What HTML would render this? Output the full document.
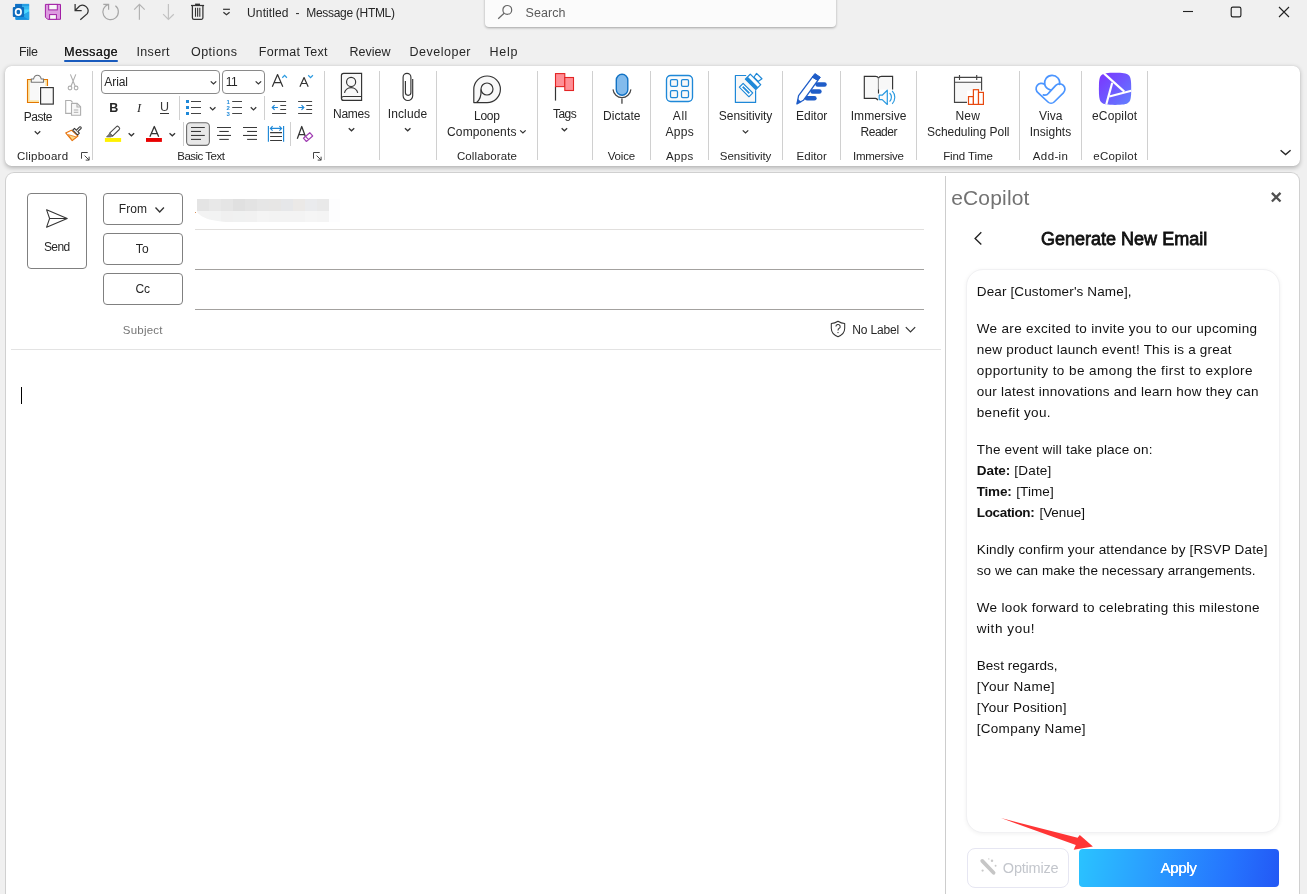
<!DOCTYPE html>
<html><head><meta charset="utf-8"><title>Untitled - Message (HTML)</title>
<style>
html,body{margin:0;padding:0;width:1307px;height:894px;overflow:hidden;}
body{width:1307px;height:894px;overflow:hidden;background:#f0f0f0;position:relative;font-family:"Liberation Sans",sans-serif;}
.t{position:absolute;white-space:pre;font-family:"Liberation Sans",sans-serif;}
.abs{position:absolute;}
svg{position:absolute;overflow:visible;}
.sep{position:absolute;width:1px;background:#d0d0d0;top:71px;height:89px;}
.ribbon{position:absolute;left:5px;top:66px;width:1295px;height:100px;background:#fff;border-radius:6.5px;box-shadow:0 1.5px 4px rgba(0,0,0,.25),0 0 1px rgba(0,0,0,.14);}
.compose{position:absolute;left:5px;top:172px;width:1293px;height:721px;background:#fff;border:1px solid #d0d0d0;border-bottom:none;border-radius:9px 9px 0 0;}
.search{position:absolute;left:485px;top:-6px;width:351px;height:33px;background:#fbfbfb;border-radius:4px;box-shadow:0 1px 2.5px rgba(0,0,0,.32);}
.btn{position:absolute;border:1px solid #808080;border-radius:4px;background:#fff;box-sizing:border-box;}
.uline{position:absolute;left:195px;width:729px;height:1px;background:#a6a6a6;}
</style></head>
<body>
<div id="root" style="position:absolute;left:0;top:0;width:1307px;height:894px;overflow:hidden;will-change:transform;">
<div class="search"></div>
<span class="t" style="left:247.12px;top:5.37px;font-size:12px;line-height:17px;letter-spacing:0.096px;color:#262626;">Untitled</span>
<span class="t" style="left:295.42px;top:5.37px;font-size:12px;line-height:17px;letter-spacing:0.000px;color:#262626;">-</span>
<span class="t" style="left:306.22px;top:5.37px;font-size:12px;line-height:17px;letter-spacing:-0.302px;color:#262626;">Message (HTML)</span>
<span class="t" style="left:525.50px;top:3.57px;font-size:12.5px;line-height:18px;letter-spacing:0.079px;color:#5a5a5a;">Search</span>
<span class="t" style="left:18.90px;top:43.37px;font-size:12.5px;line-height:18px;letter-spacing:-0.381px;color:#262626;">File</span>
<span class="t" style="left:64.10px;top:43.37px;font-size:12.5px;line-height:18px;letter-spacing:0.446px;color:#1f1f1f;text-shadow:0.28px 0 0 #1f1f1f;">Message</span>
<div class="abs" style="left:64px;top:60px;width:54px;height:2px;background:#185abd;border-radius:1px"></div>
<span class="t" style="left:136.50px;top:43.37px;font-size:12.5px;line-height:18px;letter-spacing:0.347px;color:#262626;">Insert</span>
<span class="t" style="left:190.90px;top:43.37px;font-size:12.5px;line-height:18px;letter-spacing:0.520px;color:#262626;">Options</span>
<span class="t" style="left:258.80px;top:43.37px;font-size:12.5px;line-height:18px;letter-spacing:0.294px;color:#262626;">Format Text</span>
<span class="t" style="left:349.50px;top:43.37px;font-size:12.5px;line-height:18px;letter-spacing:0.003px;color:#262626;">Review</span>
<span class="t" style="left:409.50px;top:43.37px;font-size:12.5px;line-height:18px;letter-spacing:0.503px;color:#262626;">Developer</span>
<span class="t" style="left:489.50px;top:43.37px;font-size:12.5px;line-height:18px;letter-spacing:0.764px;color:#262626;">Help</span>
<div class="ribbon"></div>
<div class="sep" style="left:92.0px"></div>
<div class="sep" style="left:324.0px"></div>
<div class="sep" style="left:379.0px"></div>
<div class="sep" style="left:436.0px"></div>
<div class="sep" style="left:537.0px"></div>
<div class="sep" style="left:592.0px"></div>
<div class="sep" style="left:650.0px"></div>
<div class="sep" style="left:708.0px"></div>
<div class="sep" style="left:782.0px"></div>
<div class="sep" style="left:840.0px"></div>
<div class="sep" style="left:916.0px"></div>
<div class="sep" style="left:1019.0px"></div>
<div class="sep" style="left:1081.0px"></div>
<div class="sep" style="left:1147.0px"></div>
<div class="sep" style="left:179px;top:96px;height:24px"></div>
<div class="sep" style="left:264px;top:96px;height:24px"></div>
<div class="sep" style="left:183px;top:122px;height:24px"></div>
<div class="sep" style="left:290px;top:122px;height:24px"></div>
<span class="t" style="left:23.72px;top:109.47px;font-size:12px;line-height:17px;letter-spacing:-0.481px;color:#262626;">Paste</span>
<span class="t" style="left:16.94px;top:147.97px;font-size:11.5px;line-height:16px;letter-spacing:0.237px;color:#262626;">Clipboard</span>
<span class="t" style="left:177.24px;top:147.97px;font-size:11.5px;line-height:16px;letter-spacing:-0.498px;color:#262626;">Basic Text</span>
<div class="btn" style="left:101px;top:70px;width:119px;height:24px;border-color:#8a8a8a"></div>
<div class="btn" style="left:222px;top:70px;width:43px;height:24px;border-color:#8a8a8a"></div>
<span class="t" style="left:104.32px;top:74.47px;font-size:12px;line-height:17px;letter-spacing:-0.086px;color:#262626;">Arial</span>
<span class="t" style="left:225.72px;top:74.47px;font-size:12px;line-height:17px;letter-spacing:-0.497px;color:#262626;">11</span>
<span class="t" style="left:109.30px;top:99.27px;font-size:12.5px;line-height:18px;letter-spacing:0.000px;color:#262626;font-weight:bold;">B</span>
<span class="t" style="left:137.00px;top:99.27px;font-size:12.5px;line-height:18px;letter-spacing:0.000px;color:#262626;font-style:italic;font-family:'Liberation Serif',serif;">I</span>
<span class="t" style="left:159.90px;top:98.37px;font-size:12.5px;line-height:18px;letter-spacing:0.000px;color:#3a3a3a;">U</span>
<div class="abs" style="left:160px;top:113px;width:9px;height:1px;background:#333"></div>
<span class="t" style="left:333.02px;top:106.47px;font-size:12px;line-height:17px;letter-spacing:-0.287px;color:#262626;">Names</span>
<span class="t" style="left:387.72px;top:106.47px;font-size:12px;line-height:17px;letter-spacing:0.127px;color:#262626;">Include</span>
<span class="t" style="left:474.02px;top:108.47px;font-size:12px;line-height:17px;letter-spacing:-0.245px;color:#262626;">Loop</span>
<span class="t" style="left:447.02px;top:124.47px;font-size:12px;line-height:17px;letter-spacing:0.147px;color:#262626;">Components</span>
<span class="t" style="left:456.94px;top:147.97px;font-size:11.5px;line-height:16px;letter-spacing:0.111px;color:#262626;">Collaborate</span>
<span class="t" style="left:552.92px;top:106.47px;font-size:12px;line-height:17px;letter-spacing:-0.529px;color:#262626;">Tags</span>
<span class="t" style="left:603.12px;top:108.47px;font-size:12px;line-height:17px;letter-spacing:0.002px;color:#262626;">Dictate</span>
<span class="t" style="left:607.74px;top:147.97px;font-size:11.5px;line-height:16px;letter-spacing:-0.153px;color:#262626;">Voice</span>
<span class="t" style="left:672.82px;top:108.47px;font-size:12px;line-height:17px;letter-spacing:0.562px;color:#262626;">All</span>
<span class="t" style="left:665.52px;top:124.47px;font-size:12px;line-height:17px;letter-spacing:0.303px;color:#262626;">Apps</span>
<span class="t" style="left:666.04px;top:147.97px;font-size:11.5px;line-height:16px;letter-spacing:0.336px;color:#262626;">Apps</span>
<span class="t" style="left:718.82px;top:108.47px;font-size:12px;line-height:17px;letter-spacing:-0.046px;color:#262626;">Sensitivity</span>
<span class="t" style="left:719.84px;top:147.97px;font-size:11.5px;line-height:16px;letter-spacing:-0.025px;color:#262626;">Sensitivity</span>
<span class="t" style="left:796.12px;top:108.47px;font-size:12px;line-height:17px;letter-spacing:-0.038px;color:#262626;">Editor</span>
<span class="t" style="left:796.54px;top:147.97px;font-size:11.5px;line-height:16px;letter-spacing:0.056px;color:#262626;">Editor</span>
<span class="t" style="left:850.72px;top:108.47px;font-size:12px;line-height:17px;letter-spacing:0.041px;color:#262626;">Immersive</span>
<span class="t" style="left:860.52px;top:124.47px;font-size:12px;line-height:17px;letter-spacing:-0.479px;color:#262626;">Reader</span>
<span class="t" style="left:853.04px;top:147.97px;font-size:11.5px;line-height:16px;letter-spacing:-0.264px;color:#262626;">Immersive</span>
<span class="t" style="left:955.52px;top:108.47px;font-size:12px;line-height:17px;letter-spacing:0.177px;color:#262626;">New</span>
<span class="t" style="left:926.92px;top:124.47px;font-size:12px;line-height:17px;letter-spacing:-0.012px;color:#262626;">Scheduling Poll</span>
<span class="t" style="left:943.14px;top:147.97px;font-size:11.5px;line-height:16px;letter-spacing:-0.083px;color:#262626;">Find Time</span>
<span class="t" style="left:1039.02px;top:108.47px;font-size:12px;line-height:17px;letter-spacing:0.111px;color:#262626;">Viva</span>
<span class="t" style="left:1029.72px;top:124.47px;font-size:12px;line-height:17px;letter-spacing:0.015px;color:#262626;">Insights</span>
<span class="t" style="left:1032.84px;top:147.97px;font-size:11.5px;line-height:16px;letter-spacing:0.376px;color:#262626;">Add-in</span>
<span class="t" style="left:1092.02px;top:108.47px;font-size:12px;line-height:17px;letter-spacing:0.162px;color:#262626;">eCopilot</span>
<span class="t" style="left:1093.24px;top:147.97px;font-size:11.5px;line-height:16px;letter-spacing:0.247px;color:#262626;">eCopilot</span>
<div class="compose"></div>
<div class="btn" style="left:27px;top:193px;width:60px;height:76px"></div>
<div class="btn" style="left:103px;top:193px;width:80px;height:32px"></div>
<div class="btn" style="left:103px;top:233px;width:80px;height:32px"></div>
<div class="btn" style="left:103px;top:273px;width:80px;height:32px"></div>
<span class="t" style="left:43.92px;top:239.47px;font-size:12px;line-height:17px;letter-spacing:-0.588px;color:#262626;">Send</span>
<span class="t" style="left:118.72px;top:201.47px;font-size:12px;line-height:17px;letter-spacing:0.088px;color:#262626;">From</span>
<span class="t" style="left:135.82px;top:241.47px;font-size:12px;line-height:17px;letter-spacing:0.286px;color:#262626;">To</span>
<span class="t" style="left:135.52px;top:281.47px;font-size:12px;line-height:17px;letter-spacing:-0.206px;color:#262626;">Cc</span>
<span class="t" style="left:122.74px;top:321.97px;font-size:11.5px;line-height:16px;letter-spacing:0.227px;color:#767676;">Subject</span>
<div class="uline" style="top:229px;background:#e1dfdd"></div><div class="uline" style="top:269px;background:#a3a19f"></div><div class="uline" style="top:309px;background:#a3a19f"></div>
<div class="abs" style="left:11px;top:349px;width:930px;height:1px;background:#e3e3e3"></div>
<div class="abs" style="left:21px;top:387px;width:1px;height:17px;background:#000"></div>
<span class="t" style="left:852.32px;top:321.77px;font-size:12px;line-height:17px;letter-spacing:-0.168px;color:#262626;">No Label</span>
<svg width="160" height="40" viewBox="190 195 160 40" style="left:190px;top:195px"><defs><clipPath id="mz"><path d="M197 199 H329 V222 H226 C212 221 201 218 197 212 Z"/></clipPath></defs><g clip-path="url(#mz)"><rect x="197" y="199" width="12.2" height="12" fill="#e4e4e4"/><rect x="197" y="211" width="12.2" height="11" fill="#f3f3f3"/><rect x="209" y="199" width="12.2" height="12" fill="#e8e8e8"/><rect x="209" y="211" width="12.2" height="11" fill="#f2f3f3"/><rect x="221" y="199" width="12.2" height="12" fill="#e5e5e5"/><rect x="221" y="211" width="12.2" height="11" fill="#f0f0f0"/><rect x="233" y="199" width="12.2" height="12" fill="#e0e0e0"/><rect x="233" y="211" width="12.2" height="11" fill="#f0f1f1"/><rect x="245" y="199" width="12.2" height="12" fill="#e3e3e3"/><rect x="245" y="211" width="12.2" height="11" fill="#f1f1f1"/><rect x="257" y="199" width="12.2" height="12" fill="#e6e6e6"/><rect x="257" y="211" width="12.2" height="11" fill="#f4f4f4"/><rect x="269" y="199" width="12.2" height="12" fill="#e7e6e5"/><rect x="269" y="211" width="12.2" height="11" fill="#f3f3f3"/><rect x="281" y="199" width="12.2" height="12" fill="#e6e7e9"/><rect x="281" y="211" width="12.2" height="11" fill="#f3f3f3"/><rect x="293" y="199" width="12.2" height="12" fill="#ebe9e7"/><rect x="293" y="211" width="12.2" height="11" fill="#f3f3f3"/><rect x="305" y="199" width="12.2" height="12" fill="#eaebed"/><rect x="305" y="211" width="12.2" height="11" fill="#f5f5f5"/><rect x="317" y="199" width="12.2" height="12" fill="#e9e9e9"/><rect x="317" y="211" width="12.2" height="11" fill="#f4f4f4"/></g><rect x="329" y="199" width="11" height="23" fill="#fdfdfe"/><rect x="195" y="212" width="1" height="1" fill="#d9905a"/></svg>
<div class="abs" style="left:945px;top:176px;width:1px;height:718px;background:#cdcdcd"></div>
<span class="t" style="left:951.16px;top:182.75px;font-size:21px;line-height:29px;letter-spacing:0.175px;color:#727272;">eCopilot</span>
<span class="t" style="left:1040.88px;top:227.16px;font-size:18px;line-height:25px;letter-spacing:0.016px;color:#111;-webkit-text-stroke:0.8px #111;">Generate New Email</span>
<div class="abs" style="left:966px;top:269px;width:313.5px;height:563.5px;border:1px solid #f1f1f3;border-radius:17px;box-shadow:0 1px 4px rgba(0,0,0,.06);box-sizing:border-box;background:#fff"></div>
<span class="t" style="left:976.76px;top:282.47px;font-size:13.5px;line-height:19px;letter-spacing:0.132px;color:#111;">Dear [Customer&#x27;s Name],</span>
<span class="t" style="left:976.76px;top:319.47px;font-size:13.5px;line-height:19px;letter-spacing:0.329px;color:#111;">We are excited to invite you to our upcoming</span>
<span class="t" style="left:976.76px;top:340.47px;font-size:13.5px;line-height:19px;letter-spacing:0.222px;color:#111;">new product launch event! This is a great</span>
<span class="t" style="left:976.76px;top:361.47px;font-size:13.5px;line-height:19px;letter-spacing:0.445px;color:#111;">opportunity to be among the first to explore</span>
<span class="t" style="left:976.76px;top:382.47px;font-size:13.5px;line-height:19px;letter-spacing:0.247px;color:#111;">our latest innovations and learn how they can</span>
<span class="t" style="left:976.76px;top:403.47px;font-size:13.5px;line-height:19px;letter-spacing:0.362px;color:#111;">benefit you.</span>
<span class="t" style="left:976.76px;top:440.47px;font-size:13.5px;line-height:19px;letter-spacing:0.194px;color:#111;">The event will take place on:</span>
<span class="t" style="left:976.76px;top:540.47px;font-size:13.5px;line-height:19px;letter-spacing:0.168px;color:#111;">Kindly confirm your attendance by [RSVP Date]</span>
<span class="t" style="left:976.76px;top:561.47px;font-size:13.5px;line-height:19px;letter-spacing:0.064px;color:#111;">so we can make the necessary arrangements.</span>
<span class="t" style="left:976.76px;top:598.47px;font-size:13.5px;line-height:19px;letter-spacing:0.327px;color:#111;">We look forward to celebrating this milestone</span>
<span class="t" style="left:976.76px;top:619.47px;font-size:13.5px;line-height:19px;letter-spacing:0.563px;color:#111;">with you!</span>
<span class="t" style="left:976.76px;top:656.47px;font-size:13.5px;line-height:19px;letter-spacing:0.041px;color:#111;">Best regards,</span>
<span class="t" style="left:976.76px;top:677.47px;font-size:13.5px;line-height:19px;letter-spacing:0.324px;color:#111;">[Your Name]</span>
<span class="t" style="left:976.76px;top:698.47px;font-size:13.5px;line-height:19px;letter-spacing:0.230px;color:#111;">[Your Position]</span>
<span class="t" style="left:976.76px;top:719.47px;font-size:13.5px;line-height:19px;letter-spacing:0.288px;color:#111;">[Company Name]</span>
<span class="t" style="left:976.76px;top:461.47px;font-size:13.5px;line-height:19px;letter-spacing:-0.044px;color:#111;font-weight:bold;">Date:</span>
<span class="t" style="left:1014.36px;top:461.47px;font-size:13.5px;line-height:19px;letter-spacing:0.172px;color:#111;">[Date]</span>
<span class="t" style="left:976.76px;top:482.47px;font-size:13.5px;line-height:19px;letter-spacing:-0.195px;color:#111;font-weight:bold;">Time:</span>
<span class="t" style="left:1016.16px;top:482.47px;font-size:13.5px;line-height:19px;letter-spacing:0.116px;color:#111;">[Time]</span>
<span class="t" style="left:976.76px;top:503.47px;font-size:13.5px;line-height:19px;letter-spacing:-0.345px;color:#111;font-weight:bold;">Location:</span>
<span class="t" style="left:1039.46px;top:503.47px;font-size:13.5px;line-height:19px;letter-spacing:-0.052px;color:#111;">[Venue]</span>
<div class="abs" style="left:967px;top:848px;width:102px;height:40px;border:1px solid #e6e6f2;border-radius:8px;box-sizing:border-box;background:#fff"></div>
<div class="abs" style="left:1079px;top:849px;width:200px;height:38px;border-radius:4px;background:linear-gradient(100deg,#2ac3ff 0%,#2a9eff 35%,#2574fe 75%,#2358f5 100%)"></div>
<span class="t" style="left:1002.82px;top:857.86px;font-size:14.5px;line-height:20px;letter-spacing:-0.207px;color:#c3c6cc;">Optimize</span>
<span class="t" style="left:1160.40px;top:857.36px;font-size:15px;line-height:21px;letter-spacing:-0.281px;color:#fff;text-shadow:0.3px 0 0 #fff;">Apply</span>
<svg width="1307" height="894" viewBox="0 0 1307 894" style="left:0;top:0"><g>
<rect x="15.2" y="3.9" width="13.9" height="15.8" rx="1" fill="#1b93e6"/>
<rect x="15.2" y="3.9" width="7" height="5.3" fill="#0f6fc4"/>
<rect x="22.2" y="3.9" width="6.9" height="5.3" fill="#35b8f1"/>
<rect x="22.2" y="3.9" width="6.9" height="2.2" fill="#1a86d6" opacity=".55"/>
<path d="M22.2 9.2 H29.1 V12.4 L22.2 15.5 Z" fill="#50d9ff"/>
<path d="M15.2 19.7 H29.1 V11.6 L15.2 19.7 Z" fill="#1490df"/>
<path d="M22 15.8 L29.1 19.7 V11.6 Z" fill="#28a8ea"/>
<rect x="12.8" y="7" width="11.3" height="10.1" rx="1" fill="#0f6cbd"/>
<ellipse cx="18.35" cy="12" rx="2.75" ry="3.05" fill="none" stroke="#fff" stroke-width="1.7"/>
</g>
<g>
<path d="M45.4 4.4 H60.5 V19.3 H47.6 L45.4 17.1 Z" fill="#dc9be0" stroke="#a11fa5" stroke-width="1"/>
<rect x="48.7" y="4.4" width="8.6" height="5.5" fill="#f8f8f8" stroke="#a11fa5" stroke-width="1"/>
<rect x="49.6" y="14.6" width="6.8" height="4.7" fill="#f8f8f8" stroke="#a11fa5" stroke-width="1"/>
</g>
<path d="M75.1 4.1 V10.5 H81.7 M75.4 10.2 L79.6 6 A5.6 5.6 0 0 1 87.3 13.6 L80.3 19.7" fill="none" stroke="#333" stroke-width="1.25"/>
<path d="M103.3 4.3 H108.6 V9.7 M108.6 4.4 A7.75 7.75 0 1 0 115.4 5.8" fill="none" stroke="#a6a6a6" stroke-width="1.2"/>
<path d="M139.4 4.3 V19.7 M134.2 9.7 L139.4 4.4 L144.7 9.7" fill="none" stroke="#b3b3b3" stroke-width="1.2"/>
<path d="M168.4 4.1 V19.5 M163.1 14.2 L168.4 19.5 L173.8 14.2" fill="none" stroke="#c2c2c2" stroke-width="1.2"/>
<g fill="none" stroke="#333" stroke-width="1.25">
<path d="M191 5.5 H204.1"/><path d="M195.1 4.4 H200" stroke-width="1.6"/>
<path d="M192.4 5.6 V17.8 A1.6 1.6 0 0 0 194 19.4 H201.3 A1.6 1.6 0 0 0 202.9 17.8 V5.6"/>
<path d="M195.5 7.8 V16.8 M197.65 7.8 V16.8 M199.8 7.8 V16.8" stroke-width="1.1"/></g>
<path d="M223.1 9.3 H229.9" fill="none" stroke="#333" stroke-width="1.2"/>
<path d="M223.40 12.30 L226.50 14.80 L229.60 12.30" fill="none" stroke="#333" stroke-width="1.25"/>
<g fill="none" stroke="#666" stroke-width="1.2"><circle cx="507.3" cy="9.9" r="4.4"/><path d="M504.1 13.2 L498.2 18.7"/></g>
<path d="M1183 11.5 H1193" stroke="#222" stroke-width="1.1" fill="none"/>
<rect x="1231.2" y="7.1" width="9.7" height="9.7" rx="1.6" fill="none" stroke="#222" stroke-width="1.15"/>
<path d="M1279 7 L1289 17 M1289 7 L1279 17" stroke="#222" stroke-width="1.1" fill="none"/>
<g>
<path d="M27.5 79.5 H47.5 V102.5 H27.5 Z" fill="#fbe3a2" stroke="#e37600" stroke-width="1.1"/>
<rect x="29.7" y="81.6" width="15.7" height="18.7" fill="#f8f8f8"/>
<path d="M31.3 82.2 V78.9 H33.6 C34.2 76.4 35.6 75.2 37.4 75.2 C39.2 75.2 40.6 76.4 41.2 78.9 H43.5 V82.2 Z" fill="#f8f8f8" stroke="#757575" stroke-width="1.05"/>
<rect x="39" y="86" width="16" height="19.6" fill="#fff"/>
<rect x="40.6" y="87.6" width="12.7" height="16.5" fill="#f8f8f8" stroke="#333" stroke-width="1.15"/>
</g>
<path d="M34.75 131.30 L37.50 133.90 L40.25 131.30" fill="none" stroke="#333" stroke-width="1.25"/>
<g fill="none" stroke="#aeaeae" stroke-width="1.1">
<path d="M70.4 74.4 L75.2 86.2 M75.8 74.4 L71 86.2"/>
<circle cx="70" cy="88" r="1.85"/><circle cx="76.1" cy="88" r="1.85"/></g>
<g fill="none" stroke="#aeaeae" stroke-width="1.1">
<path d="M71 113.4 H65.7 V100.5 H70.8 L72.6 102.3"/>
<path d="M71.5 103.4 H77.2 L80.6 106.8 V115.3 H71.5 Z" fill="#f8f8f8"/>
<path d="M77 103.6 V107 H80.4"/>
<path d="M73.8 110 H78.3 M73.8 112.3 H78.3" stroke-width="1"/></g>
<g>
<path d="M65.7 132.9 L71.4 130.2 L78 136 L72.2 140.6 Z" fill="#fff" stroke="#e8740c" stroke-width="1.1" stroke-linejoin="round"/>
<path d="M68.2 134.6 L76.4 137 L72.2 140.2 Z" fill="#fbd98a" stroke="#e8740c" stroke-width=".8" stroke-linejoin="round"/>
<path d="M72.7 130.1 L74.5 128.3 L79.4 133.2 L77.6 135 Z" fill="#f2f2f2" stroke="#333" stroke-width="1.05" stroke-linejoin="round"/>
<path d="M76.4 130.2 L79.6 126.9 A1.1 1.1 0 0 1 81.1 128.4 L77.8 131.7" fill="#f2f2f2" stroke="#333" stroke-width="1.05"/>
</g>
<g fill="none" stroke="#444" stroke-width="1"><path d="M81.5 158.7 V152.5 H87.7"/><path d="M84.6 155.6 L89.1 160.1 M89.1 156.7 V160.1 H85.7"/></g>
<g fill="none" stroke="#444" stroke-width="1"><path d="M313.5 158.7 V152.5 H319.7"/><path d="M316.6 155.6 L321.1 160.1 M321.1 156.7 V160.1 H317.7"/></g>
<path d="M210.75 81.40 L213.50 84.00 L216.25 81.40" fill="none" stroke="#333" stroke-width="1.25"/>
<path d="M255.65 81.40 L258.40 84.00 L261.15 81.40" fill="none" stroke="#333" stroke-width="1.25"/>
<path d="M272.3 86.8 L277.55 74.5 L282.8 86.8 M274.2 82.6 H280.9" fill="none" stroke="#333" stroke-width="1.2" stroke-linejoin="round"/>
<path d="M282.3 77.7 L284.6 75.4 L286.9 77.7" fill="none" stroke="#2b9ae0" stroke-width="1.25"/>
<path d="M299.9 86.8 L304.05 77.6 L308.2 86.8 M301.5 83.5 H306.6" fill="none" stroke="#333" stroke-width="1.2" stroke-linejoin="round"/>
<path d="M308.2 75.3 L310.55 77.6 L312.9 75.3" fill="none" stroke="#2b9ae0" stroke-width="1.25"/>
<rect x="186" y="100.0" width="3" height="3" fill="#1e88d8"/>
<path d="M191 101.5 H201" stroke="#444" stroke-width="1.05"/>
<rect x="186" y="106.0" width="3" height="3" fill="#1e88d8"/>
<path d="M191 107.5 H201" stroke="#444" stroke-width="1.05"/>
<rect x="186" y="112.0" width="3" height="3" fill="#1e88d8"/>
<path d="M191 113.5 H201" stroke="#444" stroke-width="1.05"/>
<path d="M209.95 107.25 L212.70 109.85 L215.45 107.25" fill="none" stroke="#333" stroke-width="1.25"/>
<text x="226.5" y="103.7" font-family="Liberation Sans" font-size="6" font-weight="bold" fill="#1e88d8">1</text>
<path d="M232.2 101.5 H242" stroke="#444" stroke-width="1.05"/>
<text x="226.5" y="109.7" font-family="Liberation Sans" font-size="6" font-weight="bold" fill="#1e88d8">2</text>
<path d="M232.2 107.5 H242" stroke="#444" stroke-width="1.05"/>
<text x="226.5" y="115.7" font-family="Liberation Sans" font-size="6" font-weight="bold" fill="#1e88d8">3</text>
<path d="M232.2 113.5 H242" stroke="#444" stroke-width="1.05"/>
<path d="M250.75 107.25 L253.50 109.85 L256.25 107.25" fill="none" stroke="#333" stroke-width="1.25"/>
<path d="M272.1 101.5 H286.1 M272.1 113.5 H286.1 M280.3 105.5 H286.1 M280.3 109.5 H286.1" stroke="#444" stroke-width="1.05" fill="none"/>
<path d="M272.40000000000003 107.5 H277.90000000000003 M274.6 105.2 L272.3 107.5 L274.6 109.8" stroke="#1e88d8" stroke-width="1.2" fill="none"/>
<path d="M298.1 101.5 H312.1 M298.1 113.5 H312.1 M306.3 105.5 H312.1 M306.3 109.5 H312.1" stroke="#444" stroke-width="1.05" fill="none"/>
<path d="M298.3 107.5 H303.70000000000005 M301.5 105.2 L303.8 107.5 L301.5 109.8" stroke="#1e88d8" stroke-width="1.2" fill="none"/>
<g>
<path d="M109.6 133.2 L116.5 126.6 A1.3 1.3 0 0 1 118.3 126.6 L119.3 127.7 A1.3 1.3 0 0 1 119.3 129.5 L112.5 136.1 Z" fill="#fff" stroke="#4a4a4a" stroke-width="1.05" stroke-linejoin="round"/>
<path d="M109.6 133.2 L112.5 136.1 L110.6 137 L106.4 137 L108.6 134.4 Z" fill="#777" stroke="#5a5a5a" stroke-width=".6" stroke-linejoin="round"/>
<rect x="104.9" y="138" width="16.2" height="3.9" fill="#fff100"/></g>
<path d="M128.65 133.20 L131.40 135.80 L134.15 133.20" fill="none" stroke="#333" stroke-width="1.25"/>
<path d="M149.9 136.7 L154.3 126.5 L158.7 136.7 M151.5 133.6 H157.1" fill="none" stroke="#333" stroke-width="1.3" stroke-linejoin="round"/>
<rect x="146" y="138" width="15.9" height="3.9" fill="#e80000"/>
<path d="M169.55 133.20 L172.30 135.80 L175.05 133.20" fill="none" stroke="#333" stroke-width="1.25"/>
<rect x="186.6" y="122.8" width="22.8" height="22.6" rx="3.6" fill="#e8e8e8" stroke="#6a6a6a" stroke-width="1.1"/>
<path d="M191 127.5 H204.8" stroke="#3a3a3a" stroke-width="1.05"/>
<path d="M191 131.45 H201" stroke="#3a3a3a" stroke-width="1.05"/>
<path d="M191 135.45 H204.8" stroke="#3a3a3a" stroke-width="1.05"/>
<path d="M191 139.4 H201" stroke="#3a3a3a" stroke-width="1.05"/>
<path d="M217 127.5 H231" stroke="#3a3a3a" stroke-width="1.05"/>
<path d="M219.3 131.45 H228.8" stroke="#3a3a3a" stroke-width="1.05"/>
<path d="M217 135.45 H231" stroke="#3a3a3a" stroke-width="1.05"/>
<path d="M219.3 139.4 H228.8" stroke="#3a3a3a" stroke-width="1.05"/>
<path d="M243 127.5 H257" stroke="#3a3a3a" stroke-width="1.05"/>
<path d="M247.1 131.45 H257" stroke="#3a3a3a" stroke-width="1.05"/>
<path d="M243 135.45 H257" stroke="#3a3a3a" stroke-width="1.05"/>
<path d="M247.1 139.4 H257" stroke="#3a3a3a" stroke-width="1.05"/>
<path d="M268.4 126 V141.7 M283.6 126 V141.7" stroke="#1e88d8" stroke-width="1.15" fill="none"/>
<path d="M270.4 128.4 H281.6 M272.6 126.2 L270.4 128.4 L272.6 130.6 M279.4 126.2 L281.6 128.4 L279.4 130.6" stroke="#1e88d8" stroke-width="1.15" fill="none"/>
<path d="M270.1 132.6 H282 M270.1 136.5 H282 M270.1 140.5 H282" stroke="#3a3a3a" stroke-width="1.05" fill="none"/>
<path d="M297.3 138.7 L301.75 126.5 L306.2 138.7 M298.9 134.6 H304.6" fill="none" stroke="#333" stroke-width="1.25" stroke-linejoin="round"/>
<path d="M303.4 138.2 L309.8 132.7 L312.7 136 L306.4 141.5 Z M305.6 136.4 L308.5 139.7" fill="#fff" stroke="#a13fb3" stroke-width="1.15" stroke-linejoin="round"/></svg>
<svg width="1307" height="894" viewBox="0 0 1307 894" style="left:0;top:0"><g fill="none" stroke="#333" stroke-width="1.15">
<path d="M361.6 73.4 H343.6 A2.2 2.2 0 0 0 341.4 75.6 V98.4 A2.1 2.1 0 0 0 343.5 100.4 H361.6 Z" fill="#f8f8f8"/>
<path d="M341.6 98.3 A1.9 1.9 0 0 1 343.5 96.5 H361.6"/>
<circle cx="351.1" cy="81.9" r="4.55"/>
<path d="M344.5 92.9 A6.7 6.4 0 0 1 357.7 92.9"/></g>
<path d="M348.75 128.20 L351.50 130.80 L354.25 128.20" fill="none" stroke="#333" stroke-width="1.25"/>
<path d="M412.7 79 V95.7 A4.8 4.8 0 0 1 403.1 95.7 V77.2 A3.9 3.9 0 0 1 410.9 77.2 V92.6 A2.75 2.75 0 0 1 405.4 92.6 V81" fill="none" stroke="#333" stroke-width="1.15"/>
<path d="M404.95 128.20 L407.70 130.80 L410.45 128.20" fill="none" stroke="#333" stroke-width="1.25"/>
<g fill="none" stroke="#333" stroke-width="1.2">
<path d="M473.8 102.6 V89.3 A13.3 13.3 0 1 1 487.1 102.6 Z" fill="#f8f8f8" stroke-linejoin="round"/>
<circle cx="487" cy="89" r="6"/>
<path d="M481 89.5 C481.4 96 479.8 100 476.6 102.4"/></g>
<path d="M520.15 130.40 L522.90 133.00 L525.65 130.40" fill="none" stroke="#333" stroke-width="1.25"/>
<g>
<path d="M555.5 86.6 V100.6" stroke="#333" stroke-width="1.2"/>
<rect x="555.5" y="73.6" width="9.3" height="13" fill="#ff8f96" stroke="#e32424" stroke-width="1.1"/>
<rect x="564.8" y="77.5" width="8.7" height="13" fill="#ff8f96" stroke="#e32424" stroke-width="1.1"/></g>
<path d="M561.65 128.20 L564.40 130.80 L567.15 128.20" fill="none" stroke="#333" stroke-width="1.25"/>
<g fill="none">
<rect x="616.3" y="74.3" width="11.5" height="21" rx="5.75" fill="#83bbec" stroke="#1272c4" stroke-width="1.4"/>
<path d="M613 89.4 A9 9.2 0 0 0 630.9 89.4" stroke="#444" stroke-width="1.2"/>
<path d="M621.95 98.6 V103.8" stroke="#444" stroke-width="1.3"/></g>
<rect x="666.5" y="75.5" width="26" height="26" rx="4.2" fill="#fbfbfb" stroke="#1e88d8" stroke-width="1.35"/>
<rect x="670.5" y="79.5" width="7" height="6.9" rx="1.3" fill="#f8f8f8" stroke="#1e88d8" stroke-width="1.25"/>
<rect x="670.5" y="90.6" width="7" height="6.9" rx="1.3" fill="#f8f8f8" stroke="#1e88d8" stroke-width="1.25"/>
<rect x="681.5" y="79.5" width="7" height="6.9" rx="1.3" fill="#f8f8f8" stroke="#1e88d8" stroke-width="1.25"/>
<rect x="681.5" y="90.6" width="7" height="6.9" rx="1.3" fill="#f8f8f8" stroke="#1e88d8" stroke-width="1.25"/>
<g stroke="#1e88d8" stroke-width="1.2" fill="none" stroke-linejoin="round">
<path d="M746.2 75.5 H735.4 V102.4 H755.6 V90.2" fill="#f8f8f8"/>
<g transform="translate(752.9 81.9) rotate(45)">
  <path d="M-2.6 -4 L-3.4 -8.6 H4.2 L3.4 -4 Z" fill="#fff"/>
  <rect x="-7.3" y="-3.6" width="14.8" height="7" fill="#fff"/>
  <path d="M-7.3 1.7 H7.5" stroke-width="3.4"/>
  <rect x="-5.9" y="7.9" width="13.6" height="5.4" fill="#fff" stroke-width="1.15"/>
  <rect x="-3.5" y="10" width="8.8" height="1.2" fill="#1e88d8" stroke-width=".7"/>
</g></g>
<path d="M742.75 130.40 L745.50 133.00 L748.25 130.40" fill="none" stroke="#333" stroke-width="1.25"/>
<g stroke-linecap="round">
<path d="M817.6 84.5 H824.5" stroke="#1f5dc8" stroke-width="4.5"/>
<path d="M812.6 91.4 H819.4" stroke="#1f5dc8" stroke-width="4.5"/>
<path d="M807 98.3 H814.4" stroke="#1f5dc8" stroke-width="4.5"/>
<path d="M812.6 76.9 L798.6 95.6 L797 103.8 L803.4 100.3 L818 80.1 Z" fill="#fff" stroke="#1f5dc8" stroke-width="1.3" stroke-linejoin="round"/>
<path d="M812.4 76.7 L814.9 73.6 L820.4 77.3 L818.2 80.1 Z" fill="#1f5dc8" stroke="#1f5dc8" stroke-width="1" stroke-linejoin="round"/>
<path d="M797 103.8 L797.9 99.4 L800.9 101.7 Z" fill="#1f5dc8" stroke="#1f5dc8" stroke-width=".6" stroke-linejoin="round"/>
</g>
<g fill="none" stroke="#333" stroke-width="1.15">
<path d="M878.5 93.6 V78.2 C878.1 77 876.6 76.4 875.4 76.4 H864.3 V98.3 H875.4 C876.6 98.3 877.4 99 877.8 100.2" fill="#f8f8f8"/>
<path d="M878.5 78.2 C878.9 77 880.4 76.4 881.6 76.4 H892.6 V89.5 H878.5" fill="#f8f8f8" stroke="none"/>
<path d="M878.5 78.2 C878.9 77 880.4 76.4 881.6 76.4 H892.6 V89.5"/>
<path d="M879.2 95.2 H882.2 L887.3 90.2 V104.5 L882.2 99.6 H879.2 Z" fill="#fbfbfb" stroke="#2b9ae0" stroke-width="1.2" stroke-linejoin="round"/>
<path d="M889.6 93 A6 6 0 0 1 889.6 101.6 M892.2 90.8 A9.4 9.4 0 0 1 892.2 103.8" stroke="#2b9ae0" stroke-width="1.15"/>
</g>
<g fill="none" stroke="#444" stroke-width="1.15">
<path d="M954.5 82.2 H981.6 V90.4 H967 V102.3 H954.5 Z" fill="#f8f8f8" stroke="none"/>
<path d="M967 102.3 H954.5 V77.3 H981.6 V90.4 M954.5 82.2 H981.6 M959.5 74.9 V79.9 M976.7 74.9 V79.9"/>
<g stroke="#e8490f" stroke-width="1.2" fill="#fff">
<rect x="968.5" y="96.6" width="4.9" height="7.8"/><rect x="973.4" y="89.7" width="5.1" height="14.7"/><rect x="978.5" y="92.4" width="4.9" height="12"/></g>
</g>
<g fill="none" stroke="#4b95ff" stroke-width="1.7" stroke-linejoin="round" stroke-linecap="round">
<path d="M1044.7 84.6 A7.6 7.6 0 1 1 1059.6 84.3 M1044.7 84.6 A7.6 7.6 0 0 0 1050.2 89.9"/>
<path d="M1044.6 84.4 A5.3 5.3 0 0 0 1038.2 92.9 L1048 102 A4.4 4.4 0 0 0 1054.1 102 L1063.4 92.9 A5.3 5.3 0 0 0 1055.8 85.4 L1048.6 93.2 A5.2 5.2 0 0 1 1043.4 94.9"/>
</g>
<defs><linearGradient id="ecg" x1="0" y1="0" x2="1" y2="1"><stop offset="0" stop-color="#7c34ff"/><stop offset=".5" stop-color="#6e58ff"/><stop offset="1" stop-color="#6282ff"/></linearGradient></defs>
<path d="M1115.05 72.8 C1130.07 72.8 1131.2 73.92 1131.2 88.85 C1131.2 103.78 1130.07 104.89999999999999 1115.05 104.89999999999999 C1100.03 104.89999999999999 1098.8999999999999 103.78 1098.8999999999999 88.85 C1098.8999999999999 73.92 1100.03 72.8 1115.05 72.8 Z" fill="url(#ecg)"/>
<g stroke="#fff" stroke-width="2.1" fill="none" stroke-linecap="butt">
<path d="M1103.4 72.9 L1124.3 91.6"/><path d="M1112.2 82.9 L1106.2 104.6"/><path d="M1109.3 96.6 L1131.3 90.7"/></g>
<path d="M1280.60 150.30 L1285.60 154.50 L1290.60 150.30" fill="none" stroke="#262626" stroke-width="1.45"/></svg>
<svg width="1307" height="894" viewBox="0 0 1307 894" style="left:0;top:0"><path d="M46.6 209.8 L67.2 218.5 L46.6 227.2 L49.6 218.5 Z M49.6 218.5 H67" fill="none" stroke="#333" stroke-width="1.05" stroke-linejoin="round"/>
<path d="M155.50 207.45 L159.70 211.95 L163.90 207.45" fill="none" stroke="#333" stroke-width="1.35"/>
<path d="M838 321.3 C835.8 322.7 833.6 323.4 831.3 323.5 V328.2 C831.3 332.1 833.8 335 838 336.7 C842.2 335 844.7 332.1 844.7 328.2 V323.5 C842.4 323.4 840.2 322.7 838 321.3 Z" fill="none" stroke="#333" stroke-width="1.05" stroke-linejoin="round"/>
<path d="M835.9 326.6 A2.15 2.1 0 1 1 838.9 328.5 C838.2 328.9 838 329.4 838 330.4" fill="none" stroke="#333" stroke-width="1.05"/><circle cx="838" cy="332.6" r=".7" fill="#333"/>
<path d="M905.80 327.10 L910.50 331.90 L915.20 327.10" fill="none" stroke="#333" stroke-width="1.2"/>
<path d="M1271.9 192.9 L1280.5 201.5 M1280.5 192.9 L1271.9 201.5" stroke="#505050" stroke-width="2.3" fill="none"/>
<path d="M981.3 232.3 L975.1 238.4 L981.3 244.5" stroke="#222" stroke-width="1.35" fill="none"/>
<g fill="#c9c9c9" stroke="none">
<path d="M982.2 860.9 L993.6 872.8" stroke="#c6c6c6" stroke-width="3.7" stroke-linecap="round"/>
<circle cx="992" cy="860.8" r="1.25"/><circle cx="995.6" cy="865.7" r=".95"/><circle cx="982.6" cy="870.6" r="1.15"/><circle cx="988.8" cy="858.9" r=".7"/>
</g>
<path d="M1001 818.1 L1077.6 837.8 L1079.8 834.9 L1092.9 846.6 L1073.7 849.8 L1075.8 844.9 Z" fill="#ff3535"/></svg>
</div>
</body></html>
